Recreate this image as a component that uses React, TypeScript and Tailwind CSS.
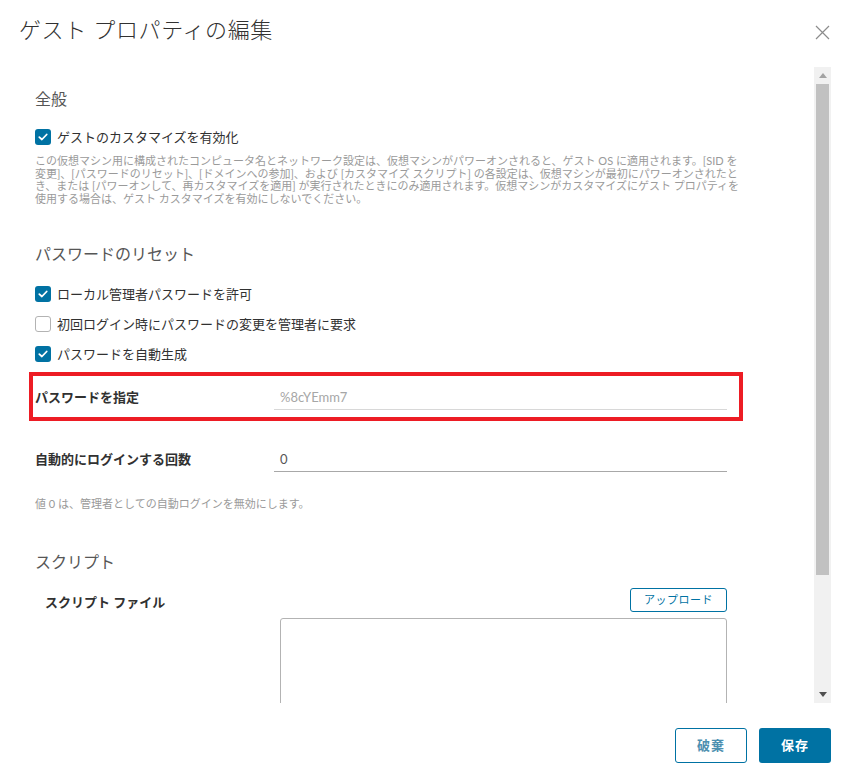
import React from 'react';

const FONT = { fontFamily: '"Lato", "Noto Sans CJK JP", sans-serif' };

// Checkbox glyph in the Clarity style
function CheckBox({ checked }: { checked: boolean }) {
  if (!checked) {
    return <span className="block w-4 h-4 rounded-[3px] border border-[#b3b3b3] bg-white shrink-0" />;
  }
  return (
    <span className="flex items-center justify-center w-4 h-4 rounded-[3px] bg-[#0072a3] shrink-0">
      <svg width="10" height="8" viewBox="0 0 10 8" fill="none">
        <path d="M1.3 4.1 L3.9 6.5 L8.7 1.5" stroke="#ffffff" strokeWidth="1.8" strokeLinecap="round" strokeLinejoin="round" />
      </svg>
    </span>
  );
}

function CheckRow({ checked, label, className = '' }: { checked: boolean; label: string; className?: string }) {
  return (
    <div className={`flex items-center h-5 gap-[6px] ${className}`}>
      <CheckBox checked={checked} />
      <span className="text-[13px] leading-5 text-[#313131]">{label}</span>
    </div>
  );
}

function FormRow({ label, value, muted }: { label: string; value: string; muted?: boolean }) {
  return (
    <div className="flex items-start">
      <div className="w-[239px] text-[13px] leading-[18px] font-bold text-[#313131]">{label}</div>
      <div
        className={`w-[453px] h-[22px] pl-[6px] text-[13px] leading-[18px] border-b ${
          muted ? 'border-[#d8d8d8] text-[#a6a6a6]' : 'border-[#a8a8a8] text-[#565656]'
        }`}
      >
        {value}
      </div>
    </div>
  );
}

export default function App() {
  return (
    <div className="w-[846px] h-[783px] bg-white flex flex-col overflow-hidden" style={FONT}>
      {/* Header */}
      <div className="h-[67px] shrink-0 flex items-start justify-between pl-[19px] pr-[16px] pt-[14px]">
        <h1 className="text-[22px] leading-[32px] font-light text-[#313131] tracking-[0.6px]">ゲスト プロパティの編集</h1>
        <svg width="15" height="15" viewBox="0 0 15 15" className="mt-[11px]">
          <path d="M1 1 L14 14 M14 1 L1 14" stroke="#8c8c8c" strokeWidth="1.2" />
        </svg>
      </div>

      {/* Body */}
      <div className="h-[636px] shrink-0 flex">
        <div className="flex-1 overflow-hidden pl-[35px] pt-[20px]">
          <h2 className="text-[16px] leading-6 text-[#565656]">全般</h2>
          <CheckRow className="mt-[16px]" checked label="ゲストのカスタマイズを有効化" />
          <p className="mt-[8px] text-[11px] leading-[12.5px] text-[#9a9a9a] whitespace-nowrap">
            <span className="block">この仮想マシン用に構成されたコンピュータ名とネットワーク設定は、仮想マシンがパワーオンされると、ゲスト OS に適用されます。[SID を</span>
            <span className="block">変更]、[パスワードのリセット]、[ドメインへの参加]、および [カスタマイズ スクリプト] の各設定は、仮想マシンが最初にパワーオンされたと</span>
            <span className="block">き、または [パワーオンして、再カスタマイズを適用] が実行されたときにのみ適用されます。仮想マシンがカスタマイズにゲスト プロパティを</span>
            <span className="block">使用する場合は、ゲスト カスタマイズを有効にしないでください。</span>
          </p>

          <h2 className="mt-[37px] text-[16px] leading-6 text-[#565656]">パスワードのリセット</h2>
          <div className="mt-[18px] flex flex-col gap-[10px]">
            <CheckRow checked label="ローカル管理者パスワードを許可" />
            <CheckRow checked={false} label="初回ログイン時にパスワードの変更を管理者に要求" />
            <CheckRow checked label="パスワードを自動生成" />
          </div>

          {/* highlighted row */}
          <div className="mt-[8px] -ml-[6px] w-[714px] border-4 border-[#ed1c24] pl-[2px] pt-[12px] pb-[7px]">
            <FormRow label="パスワードを指定" value="%8cYEmm7" muted />
          </div>

          <div className="mt-[29px]">
            <FormRow label="自動的にログインする回数" value="0" />
          </div>
          <p className="mt-[24px] text-[11px] leading-4 text-[#9a9a9a]">値 0 は、管理者としての自動ログインを無効にします。</p>

          <h2 className="mt-[38px] text-[16px] leading-6 text-[#565656]">スクリプト</h2>
          <div className="mt-[14px] flex items-center justify-between w-[692px] h-6">
            <span className="pl-[10px] mt-[4px] text-[13px] leading-[18px] font-bold text-[#313131]">スクリプト ファイル</span>
            <button className="w-[97px] h-6 border border-[#0072a3] rounded-[3px] text-[11px] text-[#0072a3] tracking-[0.5px]">
              アップロード
            </button>
          </div>
          <div className="mt-[6px] ml-[245px] w-[447px] h-[140px] border border-[#b3b3b3] rounded-[3px]" />
        </div>

        {/* Scrollbar */}
        <div className="w-[17px] shrink-0 bg-[#f1f1f1] flex flex-col items-center mr-[15px]">
          <div className="h-[17px] w-full flex items-center justify-center">
            <svg width="8" height="5" viewBox="0 0 8 5">
              <path d="M4 0 L8 5 L0 5 Z" fill="#a3a3a3" />
            </svg>
          </div>
          <div className="w-[13px] h-[491px] bg-[#c1c1c1]" />
          <div className="flex-1" />
          <div className="h-[17px] w-full flex items-center justify-center">
            <svg width="8" height="5" viewBox="0 0 8 5">
              <path d="M0 0 L8 0 L4 5 Z" fill="#505050" />
            </svg>
          </div>
        </div>
      </div>

      {/* Footer */}
      <div className="flex-1 flex justify-end items-start gap-[12px] pt-[25px] pr-[15px]">
        <button className="w-[72px] h-[35px] border border-[#0072a3] rounded-[3px] bg-white text-[13px] font-bold text-[#4d8fb0] tracking-[1px]">
          破棄
        </button>
        <button className="w-[72px] h-[35px] rounded-[3px] bg-[#0072a3] text-[13px] font-bold text-white tracking-[1px]">
          保存
        </button>
      </div>
    </div>
  );
}
